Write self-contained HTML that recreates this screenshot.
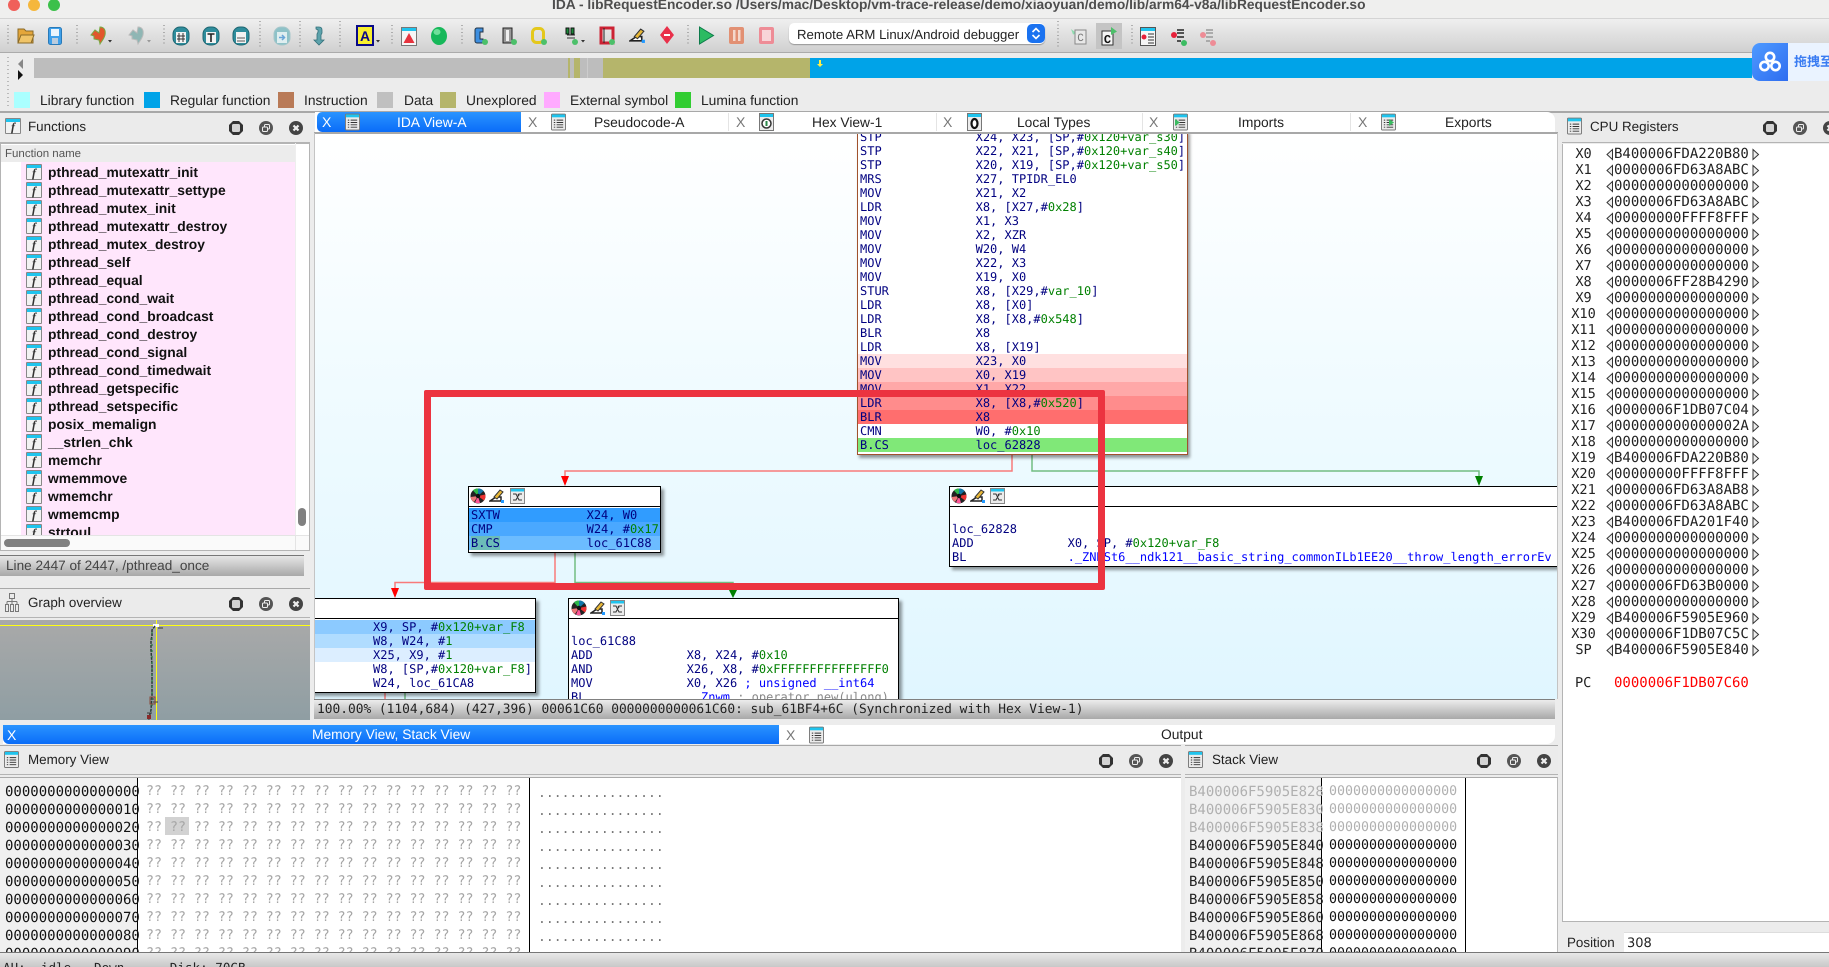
<!DOCTYPE html>
<html><head><meta charset="utf-8"><title>IDA</title>
<style>
html,body{margin:0;padding:0;width:1829px;height:967px;overflow:hidden;background:#ececec}
body{position:relative;font-family:"Liberation Sans",sans-serif;color:#222;text-rendering:geometricPrecision}
.a{position:absolute}
.t{position:absolute;white-space:nowrap;font-size:13.8px;line-height:16px;color:#222}
.m{font-family:"DejaVu Sans Mono","Liberation Mono",monospace}
pre{margin:0;font-family:"DejaVu Sans Mono","Liberation Mono",monospace}
.sq{position:absolute;top:92px;width:16px;height:16px}
.hdr{position:absolute;background:#ebebeb;border-top:1px solid #a8a8a8;border-bottom:1px solid #b4b4b4;box-sizing:border-box}
.fi{position:absolute;left:26px;width:16px;height:16px;box-sizing:border-box;border:1px solid #888;background:linear-gradient(#1fc4ee 0,#1fc4ee 3px,#f2f2f2 3px);font:italic 700 12px/17px "Liberation Serif",serif;color:#333;text-align:center;border-radius:1px}
.fn{position:absolute;left:48px;font:700 13.85px/18px "Liberation Sans",sans-serif;color:#111;white-space:nowrap}
.bl{position:absolute;background:#fff;border:1px solid #000;box-sizing:border-box;box-shadow:3px 3px 3px rgba(0,0,0,.4);overflow:hidden}
.hd{position:absolute;left:0;right:0;top:0;height:19px;border-bottom:1px solid #000;box-sizing:content-box}
.c{position:absolute;left:0;right:0}
.c div{height:14px;line-height:14px;font:12px/14px "DejaVu Sans Mono",monospace;color:#000080;white-space:pre;padding-left:2px}
.c i{font-style:normal;color:#008000}.c u{text-decoration:none;color:#0000ff}.c s{text-decoration:none;color:#888}
.x{position:absolute;font:400 14px/20px "Liberation Sans",sans-serif;color:#777}
</style></head><body>
<svg width="0" height="0" style="position:absolute"><defs>
<symbol id="doc" viewBox="0 0 16 18"><rect x=".5" y=".5" width="15" height="17" rx="1" fill="#ececec" stroke="#777"/><rect x="1" y="1" width="14" height="3" fill="#1fc4ee"/><path d="M3 7h1.500M3 9.500h1.500M3 12h1.500M3 14.500h1.500M6 7h7M6 9.500h7M6 12h7M6 14.500h7" stroke="#333" stroke-width="1"/></symbol>
<symbol id="b1" viewBox="0 0 14 14"><path d="M4 0h6l4 4v6l-4 4H4l-4-4V4z" fill="#333"/><rect x="3" y="3" width="8" height="8" rx="1.500" fill="#d4d4d4"/></symbol>
<symbol id="b2" viewBox="0 0 14 14"><circle cx="7" cy="7" r="7" fill="#555"/><rect x="5.500" y="3.500" width="5" height="4.500" rx="1" fill="none" stroke="#eee"/><rect x="3.500" y="6" width="5" height="4.500" rx="1" fill="#555" stroke="#eee"/></symbol>
<symbol id="b3" viewBox="0 0 14 14"><circle cx="7" cy="7" r="7" fill="#444"/><path d="M4.500 4.500l5 5M9.500 4.500l-5 5" stroke="#eee" stroke-width="2.200"/></symbol>
<symbol id="wh" viewBox="0 0 16 16"><circle cx="8" cy="8" r="7.500" fill="#222"/><path d="M8 8L3 2.500A7.500 7.500 0 0 1 8 .5z" fill="#2db84a"/><path d="M8 8V.5A7.500 7.500 0 0 1 13.500 3z" fill="#17a"/><path d="M8 8l7.300-1.500A7.500 7.500 0 0 1 14 12.500z" fill="#e33"/><path d="M8 8l-3 6.500A7.500 7.500 0 0 0 10 15z" fill="#f59"/><path d="M8 8L.6 9A7.500 7.500 0 0 0 4 14z" fill="#e77"/><circle cx="8" cy="8" r="2.200" fill="#111"/></symbol>
<symbol id="pn" viewBox="0 0 16 16"><path d="M1 13h11v-4L7 9z" fill="#fff" stroke="#222" stroke-width="1.500"/><path d="M5 9l6-7 3 2-6 7z" fill="#e8b838" stroke="#333"/><rect x="12" y="12" width="3" height="3" fill="#29f"/></symbol>
<symbol id="sh" viewBox="0 0 15 16"><rect x=".5" y=".5" width="14" height="15" fill="#ececec" stroke="#888"/><rect x="1" y="1" width="13" height="2.500" fill="#1fc4ee"/><path d="M3 6l3 0 3 6h3M3 12l3 0 3-6h3M8 6l1 2" stroke="#333" fill="none"/></symbol>
<pattern id="ar" width="170" height="16" patternUnits="userSpaceOnUse"><path d="M6.500 3.500L1 8.500l5.500 5z" fill="#eee" stroke="#333"/><path d="M147 3.500l5.500 5-5.500 5z" fill="#eee" stroke="#333"/></pattern>
</defs></svg>

<!-- title bar -->
<div class="a" style="left:0;top:0;width:1829px;height:19px;background:#efefee;border-bottom:1px solid #d4d4d4;box-sizing:border-box"></div>
<div class="a" style="left:8px;top:-1px;width:12px;height:12px;border-radius:50%;background:#f0605a"></div>
<div class="a" style="left:28px;top:-1px;width:12px;height:12px;border-radius:50%;background:#f5b73c"></div>
<div class="a" style="left:48px;top:-1px;width:12px;height:12px;border-radius:50%;background:#3cc04a"></div>
<div class="t" style="left:552px;top:-3px;font-size:13.77px;font-weight:700;color:#4e4e4e;word-spacing:0">IDA - libRequestEncoder.so /Users/mac/Desktop/vm-trace-release/demo/xiaoyuan/demo/lib/arm64-v8a/libRequestEncoder.so</div>

<!-- toolbar -->
<div class="a" style="left:0;top:19px;width:1829px;height:34px;background:linear-gradient(#efefef,#d0d0d0);border-bottom:1px solid #ababab;box-sizing:border-box"></div>
<div class="a" style="left:1096px;top:23px;width:26px;height:26px;background:#c4c4c4"></div>
<svg class="a" style="left:0;top:0" width="1260" height="53" viewBox="0 0 1260 53">
<g stroke="#777" stroke-width="1" stroke-dasharray="1 2.500"><path d="M8 25v20M77 25v20M164 25v20M260 21v28M300 21v28M340 21v28M392 25v20M462 25v20M688 25v20M1058 21v28M1132 25v20"/></g>
<path d="M18 29h6l2 2h7v12H18z" fill="#e4a63a" stroke="#8a6a28"/><path d="M18 43l3-8h13l-3 8z" fill="#f0c468" stroke="#8a6a28"/>
<rect x="48.500" y="27.500" width="13" height="17" rx="2" fill="#3ea0ea" stroke="#2a7ab8"/><rect x="51" y="29" width="8" height="7" fill="#eaf4fc"/><rect x="52" y="38" width="6" height="6" fill="#bcd"/>
<path d="M100 27c4 0 6 3 5 8-1 4-4 7-5 9l-1-4-5-1v-3l-3-1 4-5 4 3z" fill="#e2572c" stroke="#7a4"/><path d="M108 40l2 2.500 2-2.500z" fill="#333"/>
<path d="M138 27c4 0 6 3 5 8-1 4-4 7-5 9l-1-4-5-1v-3l-3-1 4-5 4 3z" fill="#8fb6b4" stroke="#bbb"/><path d="M147 40l2 2.500 2-2.500z" fill="#999"/>
<g fill="#2f8d9c" stroke="#1e6672"><rect x="173" y="27" width="16" height="18" rx="7"/><rect x="203" y="27" width="16" height="18" rx="7"/><rect x="233" y="27" width="16" height="18" rx="7"/></g>
<g fill="#f2f2f2"><rect x="176" y="32" width="10" height="11"/><rect x="206" y="32" width="10" height="11"/><rect x="236" y="32" width="10" height="11"/></g>
<path d="M179 33v9M183 33v9M177 36h8M177 39h8" stroke="#333" fill="none"/><path d="M207.500 34h7M211 34v8" stroke="#222" stroke-width="1.600"/><path d="M237 38h8M237 41h8" stroke="#555"/>
<rect x="274" y="27" width="16" height="18" rx="7" fill="#8ec2c8" stroke="#a6c6ca"/><rect x="277" y="32" width="10" height="11" fill="#dfeef0"/><path d="M279 37.500h5M282 35l2.500 2.500-2.500 2.500" stroke="#6aa6d8" fill="none" stroke-width="1.500"/>
<path d="M316 27h3c2 0 3 1 3 3v3l-1 2v5h3l-5 5-5-5h3v-6l1-2v-2l-2-1z" fill="#5da3ac" stroke="#34707a" stroke-width=".8"/>
<rect x="357" y="26" width="16" height="19" fill="#f7ef30" stroke="#0a0a88" stroke-width="2"/><text x="365" y="41" text-anchor="middle" font-family="Liberation Sans" font-weight="700" font-size="14" fill="#0a0a88">A</text><path d="M376 40l2 2.500 2-2.500z" fill="#333"/>
<rect x="401.500" y="27.500" width="15" height="18" fill="#f6f6f6" stroke="#777"/><rect x="402" y="28" width="14" height="3" fill="#1fc4ee"/><path d="M409 33l5.500 10h-11z" fill="#e6333e"/>
<ellipse cx="439" cy="36" rx="8" ry="9" fill="#17b85a"/><ellipse cx="437" cy="32" rx="3.500" ry="3" fill="#6fe09a"/>
<path d="M483 28h-6a2 2 0 0 0-2 2v11a2 2 0 0 0 2 2h6v-4h-3v-7h3z" fill="#3e8fe0" stroke="#234"/><circle cx="485" cy="42" r="3" fill="#4cc06a"/>
<rect x="503" y="28" width="9" height="15" fill="#999" stroke="#222"/><rect x="506" y="30" width="3" height="11" fill="#eee"/><circle cx="514" cy="42" r="3" fill="#4cc06a"/>
<rect x="532.500" y="28.500" width="11" height="14" rx="4" fill="none" stroke="#e4c81c" stroke-width="3"/><circle cx="544" cy="42" r="3" fill="#4cc06a"/>
<path d="M566 28v6h3v-6zM571 28v6h3v-6z" fill="#1a8a3a" stroke="#111"/><path d="M567 35h8M567 38h8" stroke="#333"/><circle cx="575" cy="42" r="3" fill="#4cc06a"/><path d="M581 40l2 2.500 2-2.500z" fill="#333"/>
<rect x="601" y="28" width="12" height="15" fill="none" stroke="#cc2233" stroke-width="3"/><path d="M604 28v15" stroke="#222"/><circle cx="612" cy="42" r="3" fill="#4cc06a"/>
<use href="#pn" x="629" y="27" width="17" height="17"/>
<path d="M667 26l7 9-7 9-7-9z" fill="#e9304a"/><rect x="664" y="34" width="6" height="2" fill="#fff"/>
<path d="M699.500 27l14 8.500-14 8.500z" fill="#2cbb62" stroke="#0c7a4a"/>
<rect x="729" y="27" width="15" height="17" rx="2" fill="#e29073"/><rect x="733" y="30" width="2.500" height="11" fill="#f4d8cc"/><rect x="738" y="30" width="2.500" height="11" fill="#f4d8cc"/>
<rect x="759" y="27" width="15" height="17" rx="2" fill="#ee8c96"/><rect x="762" y="30" width="9" height="11" fill="#f8d4d8"/>
<path d="M1071 29l6 4.500-4 1z" fill="#8fdcb0"/><rect x="1075" y="30" width="11" height="14" fill="#e8e8e8" stroke="#888"/><text x="1080.500" y="41" text-anchor="middle" font-family="Liberation Mono" font-size="11" fill="#777">C</text>
<rect x="1102" y="31" width="11" height="14" fill="#f4f4f4" stroke="#333"/><text x="1107.500" y="43" text-anchor="middle" font-family="Liberation Mono" font-weight="700" font-size="12" fill="#111">C</text><path d="M1111 27l6 4.500-6 3.500z" fill="#4cc06a"/>
<rect x="1140.500" y="27.500" width="15" height="18" fill="#f6f6f6" stroke="#555"/><rect x="1141" y="28" width="14" height="3" fill="#1fc4ee"/><circle cx="1144" cy="37" r="2.500" fill="#e6203a"/><path d="M1148 34h6M1148 37h6M1148 40h6M1148 43h6" stroke="#333"/>
<circle cx="1174" cy="35" r="3" fill="#e6203a"/><path d="M1177 30h7M1177 33h7M1177 37h7M1177 41h4" stroke="#222" stroke-width="1.500"/><circle cx="1184" cy="43" r="3" fill="#3cbc62"/>
<circle cx="1203" cy="35" r="3" fill="#ee8c96"/><path d="M1206 30h7M1206 33h7M1206 37h7M1206 41h4" stroke="#999" stroke-width="1.500"/><circle cx="1213" cy="43" r="3" fill="#ee8c96"/>
</svg>
<div class="a" style="left:789px;top:23px;width:256px;height:21px;background:#fff;border-radius:5px;box-shadow:0 1px 1px rgba(0,0,0,.3)"></div>
<div class="t" style="left:797px;top:27px;font-size:13.2px;color:#222">Remote ARM Linux/Android debugger</div>
<div class="a" style="left:1027px;top:24px;width:18px;height:19px;border-radius:5px;background:#1a72f0"></div>
<svg class="a" style="left:1027px;top:24px" width="18" height="19"><path d="M5.500 8L9 4.500 12.500 8M5.500 11L9 14.500 12.500 11" stroke="#fff" stroke-width="1.600" fill="none"/></svg>

<!-- nav band -->
<svg class="a" style="left:0;top:53px" width="1829" height="58">
<rect x="34" y="5" width="534" height="20" fill="#bdbdbd"/><rect x="568" y="5" width="2" height="20" fill="#b5b56b"/><rect x="570" y="5" width="4" height="20" fill="#bdbdbd"/><rect x="574" y="5" width="6" height="20" fill="#b5b56b"/><rect x="580" y="5" width="23" height="20" fill="#bdbdbd"/><rect x="587" y="5" width="1" height="20" fill="#ccc"/>
<rect x="603" y="5" width="207" height="20" fill="#b5b56b"/><rect x="810" y="5" width="942" height="20" fill="#00a3e8"/>
<path d="M819 7h2v4h2l-3 3-3-3h2z" fill="#ffee44"/>
<path d="M23 6l-5 5 5 5z" fill="#888"/><path d="M18 17l5 5-5 5z" fill="#111"/>
<path d="M8 4v50" stroke="#888" stroke-dasharray="1 3"/>
</svg>
<div class="sq" style="left:14px;background:#aaffff"></div><div class="t" style="left:40px;top:93px">Library function</div>
<div class="sq" style="left:144px;background:#00a3e8"></div><div class="t" style="left:170px;top:93px">Regular function</div>
<div class="sq" style="left:278px;background:#b97a57"></div><div class="t" style="left:304px;top:93px">Instruction</div>
<div class="sq" style="left:377px;background:#c0c0c0"></div><div class="t" style="left:404px;top:93px">Data</div>
<div class="sq" style="left:440px;background:#b5b56b"></div><div class="t" style="left:466px;top:93px">Unexplored</div>
<div class="sq" style="left:544px;background:#ffaaff"></div><div class="t" style="left:570px;top:93px">External symbol</div>
<div class="sq" style="left:675px;background:#32cd32"></div><div class="t" style="left:701px;top:93px">Lumina function</div>

<!-- baidu widget -->
<div class="a" style="left:1752px;top:43px;width:77px;height:38px;background:#eaf3ff;border-radius:8px 0 0 8px;overflow:hidden">
<div class="a" style="left:0;top:0;width:36px;height:38px;background:linear-gradient(135deg,#4e9aff,#2f6df0)"></div></div>
<svg class="a" style="left:1758px;top:50px" width="24" height="24"><g fill="none" stroke="#fff" stroke-width="2.600"><circle cx="12" cy="7" r="4.200"/><circle cx="6.500" cy="16" r="4.200"/><circle cx="17.500" cy="16" r="4.200"/></g></svg>
<div class="t" style="left:1794px;top:54px;font:700 13px/16px 'Liberation Sans','Noto Sans CJK SC',sans-serif;color:#3a7cf2">拖拽至</div>

<div class="a" style="left:0;top:111px;width:1829px;height:2px;background:#a8a8a8"></div>

<!-- Functions panel -->
<div class="hdr" style="left:0;top:112px;width:310px;height:31px"></div>
<div class="fi" style="left:5px;top:118px">f</div>
<div class="t" style="left:28px;top:119px;font-size:13.4px">Functions</div>
<svg class="a" style="left:229px;top:121px" width="14" height="14"><use href="#b1"/></svg>
<svg class="a" style="left:259px;top:121px" width="14" height="14"><use href="#b2"/></svg>
<svg class="a" style="left:289px;top:121px" width="14" height="14"><use href="#b3"/></svg>
<div class="a" style="left:0;top:143px;width:310px;height:408px;background:#fff;border:1px solid #b4b4b4;box-sizing:border-box;overflow:hidden"></div>
<div class="a" style="left:1px;top:144px;width:294px;height:391px;overflow:hidden">
<div class="a" style="left:0;top:1px;width:294px;height:17px;background:#ececec"></div>
<div class="t" style="left:4px;top:2px;font-size:11.5px;color:#555">Function name</div>
<div class="a" style="left:20px;top:18px;width:274px;height:380px;background:#ffe6fc"></div>
</div>
<div class="a" style="left:0;top:161px;width:295px;height:374px;overflow:hidden">
<div class="fi" style="top:3px">f</div><div class="fn" style="top:2px">pthread_mutexattr_init</div>
<div class="fi" style="top:21px">f</div><div class="fn" style="top:20px">pthread_mutexattr_settype</div>
<div class="fi" style="top:39px">f</div><div class="fn" style="top:38px">pthread_mutex_init</div>
<div class="fi" style="top:57px">f</div><div class="fn" style="top:56px">pthread_mutexattr_destroy</div>
<div class="fi" style="top:75px">f</div><div class="fn" style="top:74px">pthread_mutex_destroy</div>
<div class="fi" style="top:93px">f</div><div class="fn" style="top:92px">pthread_self</div>
<div class="fi" style="top:111px">f</div><div class="fn" style="top:110px">pthread_equal</div>
<div class="fi" style="top:129px">f</div><div class="fn" style="top:128px">pthread_cond_wait</div>
<div class="fi" style="top:147px">f</div><div class="fn" style="top:146px">pthread_cond_broadcast</div>
<div class="fi" style="top:165px">f</div><div class="fn" style="top:164px">pthread_cond_destroy</div>
<div class="fi" style="top:183px">f</div><div class="fn" style="top:182px">pthread_cond_signal</div>
<div class="fi" style="top:201px">f</div><div class="fn" style="top:200px">pthread_cond_timedwait</div>
<div class="fi" style="top:219px">f</div><div class="fn" style="top:218px">pthread_getspecific</div>
<div class="fi" style="top:237px">f</div><div class="fn" style="top:236px">pthread_setspecific</div>
<div class="fi" style="top:255px">f</div><div class="fn" style="top:254px">posix_memalign</div>
<div class="fi" style="top:273px">f</div><div class="fn" style="top:272px">__strlen_chk</div>
<div class="fi" style="top:291px">f</div><div class="fn" style="top:290px">memchr</div>
<div class="fi" style="top:309px">f</div><div class="fn" style="top:308px">wmemmove</div>
<div class="fi" style="top:327px">f</div><div class="fn" style="top:326px">wmemchr</div>
<div class="fi" style="top:345px">f</div><div class="fn" style="top:344px">wmemcmp</div>
<div class="fi" style="top:363px">f</div><div class="fn" style="top:362px">strtoul</div>
</div>
<div class="a" style="left:295px;top:143px;width:1px;height:407px;background:#eee"></div>
<div class="a" style="left:298px;top:508px;width:8px;height:18px;border-radius:4px;background:#808080"></div>
<div class="a" style="left:1px;top:535px;width:308px;height:15px;background:#fafafa;border-top:1px solid #e4e4e4;box-sizing:border-box"></div>
<div class="a" style="left:295px;top:535px;width:1px;height:15px;background:#e4e4e4"></div>
<div class="a" style="left:4px;top:539px;width:66px;height:8px;border-radius:4px;background:#808080"></div>
<div class="a" style="left:0;top:555px;width:304px;height:21px;background:linear-gradient(#e6e6e6,#a8a8a8);border-top:1px solid #777;box-sizing:border-box"></div>
<div class="t" style="left:6px;top:558px;font-size:13.6px;color:#444">Line 2447 of 2447, /pthread_once</div>

<!-- Graph overview -->
<div class="hdr" style="left:0;top:588px;width:310px;height:30px"></div>
<svg class="a" style="left:5px;top:593px" width="14" height="20"><g fill="none" stroke="#777"><rect x="4.500" y=".5" width="5" height="5"/><path d="M7 5.500v3M2 8.500h10M2 8.500v3M7 8.500v3M12 8.500v3"/><rect x=".5" y="11.500" width="3" height="7"/><rect x="5.500" y="11.500" width="3" height="7"/><rect x="10.500" y="11.500" width="3" height="7"/></g></svg>
<div class="t" style="left:28px;top:595px;font-size:13.4px">Graph overview</div>
<svg class="a" style="left:229px;top:597px" width="14" height="14"><use href="#b1"/></svg>
<svg class="a" style="left:259px;top:597px" width="14" height="14"><use href="#b2"/></svg>
<svg class="a" style="left:289px;top:597px" width="14" height="14"><use href="#b3"/></svg>
<div class="a" style="left:0;top:620px;width:310px;height:100px;background:linear-gradient(#a9a9a9,#8f9ea3)"></div>
<svg class="a" style="left:0;top:620px" width="310" height="100">
<path d="M0 5.500h310M156.500 0v100" stroke="#ffff10" stroke-width="1"/>
<rect x="153" y="4" width="6" height="3" fill="#fff"/>
<path d="M155 6l-3 4v6l-1 4v10l1 15v30l-1 15-2 8-1 8" fill="none" stroke="#2c3a38" stroke-width="1.500" stroke-dasharray="3 1"/>
<path d="M152 12v75" stroke="#2e7a46" stroke-width="1.200" stroke-dasharray="2 4"/>
<path d="M158 8h5M153 82h5M147 93h5M150 79h4M147 97h4" stroke="#3a3a3a"/>
<rect x="150" y="77" width="5" height="7" fill="none" stroke="#8a4a3a"/><rect x="147" y="95" width="4" height="4" fill="#8a2a2a"/>
</svg>

<!-- Main tabs -->
<div class="a" style="left:315px;top:112px;width:1240px;height:20px;background:#fff;border-radius:0 8px 0 0"></div>
<div class="a" style="left:317px;top:112px;width:204px;height:20px;background:linear-gradient(#2a94ff,#0a6cf8);border-radius:5px 0 0 5px"></div>
<div class="x" style="left:322px;top:112px;color:#fff">X</div>
<svg class="a" style="left:345px;top:113px" width="15" height="18"><use href="#doc"/></svg>
<div class="t" style="left:397px;top:115px;color:#fff">IDA View-A</div>
<div class="x" style="left:528px;top:112px">X</div>
<svg class="a" style="left:551px;top:113px" width="15" height="18"><use href="#doc"/></svg>
<div class="t" style="left:594px;top:115px">Pseudocode-A</div>
<div class="a" style="left:728px;top:113px;width:1px;height:18px;background:#e4e4e4"></div>
<div class="x" style="left:736px;top:112px">X</div>
<svg class="a" style="left:759px;top:113px" width="15" height="18"><rect x=".5" y=".5" width="14" height="17" fill="#ececec" stroke="#777"/><rect x="1" y="1" width="13" height="3" fill="#1fc4ee"/><circle cx="7.500" cy="10.500" r="4.500" fill="#fff" stroke="#333" stroke-width="1.500"/><path d="M7.500 8v5" stroke="#2a8a4a" stroke-width="2"/></svg>
<div class="t" style="left:812px;top:115px">Hex View-1</div>
<div class="a" style="left:936px;top:113px;width:1px;height:18px;background:#e4e4e4"></div>
<div class="x" style="left:943px;top:112px">X</div>
<svg class="a" style="left:967px;top:113px" width="15" height="18"><rect x=".5" y=".5" width="14" height="17" fill="#ececec" stroke="#777"/><rect x="1" y="1" width="13" height="3" fill="#1fc4ee"/><ellipse cx="7.500" cy="10.500" rx="3" ry="4.500" fill="#fff" stroke="#111" stroke-width="2.200"/></svg>
<div class="t" style="left:1017px;top:115px">Local Types</div>
<div class="a" style="left:1142px;top:113px;width:1px;height:18px;background:#e4e4e4"></div>
<div class="x" style="left:1149px;top:112px">X</div>
<svg class="a" style="left:1173px;top:113px" width="15" height="18"><use href="#doc"/><path d="M2 6l5 3.500-5 3.500z" fill="#3cbc62"/></svg>
<div class="t" style="left:1238px;top:115px">Imports</div>
<div class="a" style="left:1350px;top:113px;width:1px;height:18px;background:#e4e4e4"></div>
<div class="x" style="left:1358px;top:112px">X</div>
<svg class="a" style="left:1381px;top:113px" width="15" height="18"><use href="#doc"/><path d="M8 6l5 3.500-5 3.500z" fill="#3cbc62"/></svg>
<div class="t" style="left:1445px;top:115px">Exports</div>
<div class="a" style="left:314px;top:132px;width:1244px;height:2px;background:#a8a8a8"></div>

<!-- Graph -->
<div class="a" style="left:315px;top:134px;width:1242px;height:565px;overflow:hidden;background:linear-gradient(#fff,#f0fbff 45%,#e0f6ff)">
<div class="a" style="left:-315px;top:-134px;width:1829px;height:967px">

<svg class="a" style="left:0;top:0" width="1829" height="967">
<g fill="none" stroke-width="1.500">
<path d="M1012 452v19H565v6" stroke="#f87a7a"/>
<path d="M1032 455v16h447v6" stroke="#72bd82"/>
<path d="M555 553v29.500H395v6" stroke="#f87a7a"/>
<path d="M575 553v29.500h158v8" stroke="#72bd82"/>
<path d="M385 693v8" stroke="#f87a7a"/><path d="M405 693v8" stroke="#72bd82"/>
</g>
<path d="M561 476h8l-4 10z" fill="#f00"/>
<path d="M1475 476h8l-4 10z" fill="#008000"/>
<path d="M391 588h8l-4 10z" fill="#f00"/>
<path d="M729 590h8l-4 8z" fill="#008000"/>
</svg>

<!-- top block -->
<div class="a" style="left:857px;top:130px;width:331px;height:325px;background:#fff;border:1px solid #a0522d;border-top:0;box-sizing:border-box;box-shadow:2px 3px 3px rgba(0,0,0,.4)">
<div class="c" style="top:0">
<div>STP             X24, X23, [SP,#<i>0x120+var_s30</i>]</div>
<div>STP             X22, X21, [SP,#<i>0x120+var_s40</i>]</div>
<div>STP             X20, X19, [SP,#<i>0x120+var_s50</i>]</div>
<div>MRS             X27, TPIDR_EL0</div>
<div>MOV             X21, X2</div>
<div>LDR             X8, [X27,#<i>0x28</i>]</div>
<div>MOV             X1, X3</div>
<div>MOV             X2, XZR</div>
<div>MOV             W20, W4</div>
<div>MOV             X22, X3</div>
<div>MOV             X19, X0</div>
<div>STUR            X8, [X29,#<i>var_10</i>]</div>
<div>LDR             X8, [X0]</div>
<div>LDR             X8, [X8,#<i>0x548</i>]</div>
<div>BLR             X8</div>
<div>LDR             X8, [X19]</div>
<div style="background:#ffe0e0">MOV             X23, X0</div>
<div style="background:#ffc4c4">MOV             X0, X19</div>
<div style="background:#ffa8a8">MOV             X1, X22</div>
<div style="background:#ff8c8c">LDR             X8, [X8,#<i>0x520</i>]</div>
<div style="background:#ff6e6e">BLR             X8</div>
<div>CMN             W0, #<i>0x10</i></div>
<div style="background:#80e878">B.CS            loc_62828</div>
</div></div>

<!-- SXTW block -->
<div class="bl" style="left:468px;top:486px;width:193px;height:67px">
<div class="hd"></div>
<svg class="a" style="left:1px;top:1px" width="16" height="16"><use href="#wh"/></svg>
<svg class="a" style="left:20px;top:1px" width="16" height="16"><use href="#pn"/></svg>
<svg class="a" style="left:41px;top:1px" width="15" height="16"><use href="#sh"/></svg>
<div class="c" style="top:21px">
<div style="background:#309cff">SXTW            X24, W0</div>
<div style="background:#4aa8ff">CMP             W24, #<i>0x17</i></div>
<div style="background:#6cbcff"><span style="background:#6cbcb8">B.CS</span>            loc_61C88</div>
</div></div>

<!-- left-bottom block -->
<div class="bl" style="left:300px;top:598px;width:236px;height:95px">
<div class="hd"></div>
<div class="c" style="top:21px">
<div style="background:#8ccaff;padding-left:72px">X9, SP, #<i>0x120+var_F8</i></div>
<div style="background:#b0dcff;padding-left:72px">W8, W24, #<i>1</i></div>
<div style="background:#dceeff;padding-left:72px">X25, X9, #<i>1</i></div>
<div style="padding-left:72px">W8, [SP,#<i>0x120+var_F8</i>]</div>
<div style="padding-left:72px">W24, loc_61CA8</div>
</div></div>

<!-- loc_61C88 block -->
<div class="bl" style="left:568px;top:598px;width:331px;height:130px">
<div class="hd"></div>
<svg class="a" style="left:2px;top:1px" width="16" height="16"><use href="#wh"/></svg>
<svg class="a" style="left:21px;top:1px" width="16" height="16"><use href="#pn"/></svg>
<svg class="a" style="left:41px;top:1px" width="15" height="16"><use href="#sh"/></svg>
<div class="c" style="top:21px">
<div> </div>
<div>loc_61C88</div>
<div>ADD             X8, X24, #<i>0x10</i></div>
<div>AND             X26, X8, #<i>0xFFFFFFFFFFFFFFF0</i></div>
<div>MOV             X0, X26 <u>; unsigned __int64</u></div>
<div>BL              <u>._Znwm</u> <s>; operator new(ulong)</s></div>
</div></div>

<!-- loc_62828 block -->
<div class="bl" style="left:949px;top:486px;width:640px;height:81px">
<div class="hd"></div>
<svg class="a" style="left:1px;top:1px" width="16" height="16"><use href="#wh"/></svg>
<svg class="a" style="left:20px;top:1px" width="16" height="16"><use href="#pn"/></svg>
<svg class="a" style="left:40px;top:1px" width="15" height="16"><use href="#sh"/></svg>
<div class="c" style="top:21px">
<div> </div>
<div>loc_62828</div>
<div>ADD             X0, SP, #<i>0x120+var_F8</i></div>
<div>BL              <u>._ZNKSt6__ndk121__basic_string_commonILb1EE20__throw_length_errorEv</u></div>
</div></div>

<!-- red annotation -->
<div class="a" style="left:424px;top:390px;width:681px;height:200px;border:7px solid #ec3340;box-sizing:border-box;border-radius:2px"></div>
</div></div>

<div class="a" style="left:314px;top:133px;width:1px;height:566px;background:#c4c4c4"></div>
<div class="a" style="left:1557px;top:133px;width:1px;height:566px;background:#c4c4c4"></div>
<div class="a" style="left:314px;top:699px;width:1241px;height:20px;background:linear-gradient(#ececec,#a8a8a8);border-top:1px solid #808080;box-sizing:border-box"></div>
<pre class="a" style="left:317px;top:702px;font-size:12.87px;line-height:16px;color:#222">100.00% (1104,684) (427,396) 00061C60 0000000000061C60: sub_61BF4+6C (Synchronized with Hex View-1)</pre>

<!-- Bottom tabs -->
<div class="a" style="left:3px;top:725px;width:1552px;height:19px;background:#fff;border-radius:0 0 8px 0"></div>
<div class="a" style="left:3px;top:725px;width:776px;height:19px;background:linear-gradient(#2a94ff,#0a6cf8);border-radius:0 0 0 6px"></div>
<div class="x" style="left:7px;top:725px;color:#fff">X</div>
<div class="t" style="left:312px;top:727px;color:#fff">Memory View, Stack View</div>
<div class="x" style="left:786px;top:725px">X</div>
<svg class="a" style="left:809px;top:726px" width="15" height="18"><use href="#doc"/></svg>
<div class="t" style="left:1161px;top:727px">Output</div>

<!-- Memory view -->
<div class="hdr" style="left:0;top:745px;width:1181px;height:30px"></div>
<svg class="a" style="left:4px;top:751px" width="15" height="17"><use href="#doc"/></svg>
<div class="t" style="left:28px;top:752px;font-size:13.4px">Memory View</div>
<svg class="a" style="left:1099px;top:754px" width="14" height="14"><use href="#b1"/></svg>
<svg class="a" style="left:1129px;top:754px" width="14" height="14"><use href="#b2"/></svg>
<svg class="a" style="left:1159px;top:754px" width="14" height="14"><use href="#b3"/></svg>
<div class="a" style="left:0;top:777px;width:1181px;height:175px;background:#fff;overflow:hidden;border-top:1px solid #aaa;box-sizing:border-box">
<div class="a" style="left:0;top:0;width:137px;height:175px;background:#f0f0f0"></div>
<div class="a" style="left:137px;top:0;width:1px;height:175px;background:#000"></div>
<div class="a" style="left:529px;top:0;width:1px;height:175px;background:#000"></div>
<div class="a" style="left:165px;top:39px;width:24px;height:18px;background:#d2d2d2"></div>
<pre class="a" style="left:5px;top:5px;font-size:14px;line-height:18px;color:#111;width:134px;overflow:hidden">0000000000000000
0000000000000010
0000000000000020
0000000000000030
0000000000000040
0000000000000050
0000000000000060
0000000000000070
0000000000000080
0000000000000090</pre>
<pre class="a" style="left:146px;top:5px;font-size:13.27px;line-height:18px;color:#a6a6a6">?? ?? ?? ?? ?? ?? ?? ?? ?? ?? ?? ?? ?? ?? ?? ??
?? ?? ?? ?? ?? ?? ?? ?? ?? ?? ?? ?? ?? ?? ?? ??
?? ?? ?? ?? ?? ?? ?? ?? ?? ?? ?? ?? ?? ?? ?? ??
?? ?? ?? ?? ?? ?? ?? ?? ?? ?? ?? ?? ?? ?? ?? ??
?? ?? ?? ?? ?? ?? ?? ?? ?? ?? ?? ?? ?? ?? ?? ??
?? ?? ?? ?? ?? ?? ?? ?? ?? ?? ?? ?? ?? ?? ?? ??
?? ?? ?? ?? ?? ?? ?? ?? ?? ?? ?? ?? ?? ?? ?? ??
?? ?? ?? ?? ?? ?? ?? ?? ?? ?? ?? ?? ?? ?? ?? ??
?? ?? ?? ?? ?? ?? ?? ?? ?? ?? ?? ?? ?? ?? ?? ??
?? ?? ?? ?? ?? ?? ?? ?? ?? ?? ?? ?? ?? ?? ?? ??</pre>
<pre class="a" style="left:538px;top:7px;font-size:13.05px;line-height:18px;color:#777">................
................
................
................
................
................
................
................
................
................</pre>
</div>

<!-- Stack view -->
<div class="hdr" style="left:1185px;top:745px;width:373px;height:30px"></div>
<svg class="a" style="left:1188px;top:751px" width="15" height="17"><use href="#doc"/></svg>
<div class="t" style="left:1212px;top:752px;font-size:13.4px">Stack View</div>
<svg class="a" style="left:1477px;top:754px" width="14" height="14"><use href="#b1"/></svg>
<svg class="a" style="left:1507px;top:754px" width="14" height="14"><use href="#b2"/></svg>
<svg class="a" style="left:1537px;top:754px" width="14" height="14"><use href="#b3"/></svg>
<div class="a" style="left:1185px;top:777px;width:373px;height:175px;background:#fff;overflow:hidden;border-top:1px solid #aaa;border-right:1px solid #bbb;box-sizing:border-box">
<div class="a" style="left:0;top:0;width:136px;height:175px;background:#f0f0f0"></div>
<div class="a" style="left:136px;top:0;width:1px;height:175px;background:#000"></div>
<div class="a" style="left:280px;top:0;width:1px;height:175px;background:#000"></div>
<pre class="a" style="left:4px;top:5px;font-size:14px;line-height:18px;color:#222"><span style="color:#b0b0b0">B400006F5905E828
B400006F5905E830
B400006F5905E838</span>
B400006F5905E840
B400006F5905E848
B400006F5905E850
B400006F5905E858
B400006F5905E860
B400006F5905E868
B400006F5905E870</pre>
<pre class="a" style="left:144px;top:5px;font-size:13.3px;line-height:18px;color:#111"><span style="color:#b0b0b0">0000000000000000
0000000000000000
0000000000000000</span>
0000000000000000
0000000000000000
0000000000000000
0000000000000000
0000000000000000
0000000000000000
0000000000000000</pre>
</div>

<!-- Registers -->
<div class="hdr" style="left:1562px;top:112px;width:267px;height:31px"></div>
<svg class="a" style="left:1567px;top:117px" width="15" height="18"><use href="#doc"/></svg>
<div class="t" style="left:1590px;top:119px;font-size:13.4px">CPU Registers</div>
<svg class="a" style="left:1763px;top:121px" width="14" height="14"><use href="#b1"/></svg>
<svg class="a" style="left:1793px;top:121px" width="14" height="14"><use href="#b2"/></svg>
<svg class="a" style="left:1823px;top:121px" width="14" height="14"><use href="#b3"/></svg>
<div class="a" style="left:1562px;top:144px;width:267px;height:778px;background:#fff;border-left:1px solid #b4b4b4;border-bottom:1px solid #b4b4b4;box-sizing:border-box"></div>
<svg class="a" style="left:1606px;top:146px" width="160" height="512"><rect width="160" height="512" fill="url(#ar)"/></svg>
<pre class="a" style="left:1570px;top:146px;width:27px;text-align:center;font-size:13.6px;line-height:16px;color:#222">X0
X1
X2
X3
X4
X5
X6
X7
X8
X9
X10
X11
X12
X13
X14
X15
X16
X17
X18
X19
X20
X21
X22
X23
X24
X25
X26
X27
X28
X29
X30
SP</pre>
<pre class="a" style="left:1614px;top:146px;font-size:14px;line-height:16px;color:#222">B400006FDA220B80
0000006FD63A8ABC
0000000000000000
0000006FD63A8ABC
00000000FFFF8FFF
0000000000000000
0000000000000000
0000000000000000
0000006FF28B4290
0000000000000000
0000000000000000
0000000000000000
0000000000000000
0000000000000000
0000000000000000
0000000000000000
0000006F1DB07C04
000000000000002A
0000000000000000
B400006FDA220B80
00000000FFFF8FFF
0000006FD63A8AB8
0000006FD63A8ABC
B400006FDA201F40
0000000000000000
0000000000000000
0000000000000000
0000006FD63B0000
0000000000000000
B400006F5905E960
0000006F1DB07C5C
B400006F5905E840</pre>
<pre class="a" style="left:1575px;top:675px;font-size:13.6px;line-height:16px;color:#222">PC</pre>
<pre class="a" style="left:1614px;top:675px;font-size:14px;line-height:16px;color:#ff0000">0000006F1DB07C60</pre>
<div class="t" style="left:1567px;top:935px;font-size:13.4px">Position</div>
<div class="a" style="left:1624px;top:932px;width:205px;height:20px;background:#fff;border-top:1px solid #ddd;box-sizing:border-box"></div>
<div class="t" style="left:1627px;top:936px;font-size:13px;font-family:'DejaVu Sans',sans-serif">308</div>

<!-- status bar -->
<div class="a" style="left:0;top:952px;width:1829px;height:15px;background:linear-gradient(#e8e8e8,#c8c8c8);border-top:1px solid #777;box-sizing:border-box;overflow:hidden">
<pre style="position:absolute;left:3px;top:7px;font-size:12.6px;line-height:16px;color:#222">AU:  idle   Down      Disk: 70GB</pre></div>
</body></html>
